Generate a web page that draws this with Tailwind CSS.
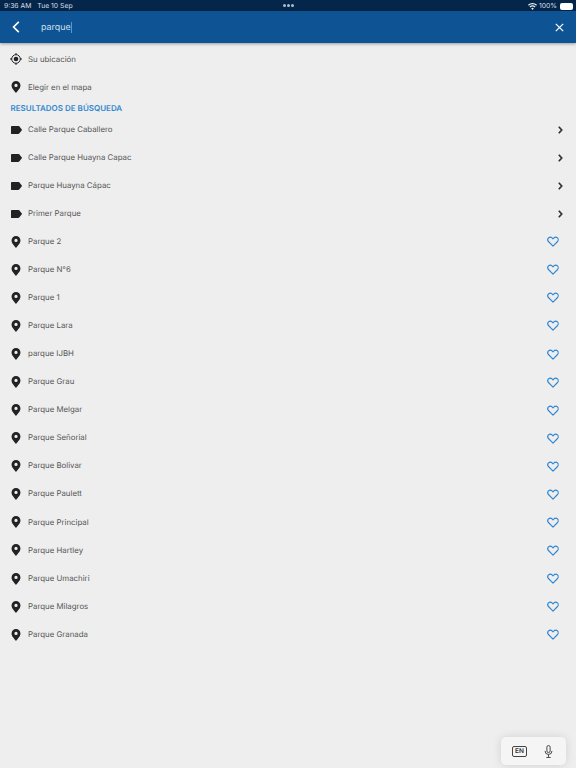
<!DOCTYPE html>
<html lang="es">
<head>
  <meta charset="utf-8" />
  <title>Buscar</title>
  <script src="https://cdn.jsdelivr.net/npm/@tailwindcss/browser@4"></script>
</head>
<body class="relative h-[768px] w-[576px] overflow-hidden bg-[#eeeeee] font-['Inter',sans-serif] [text-rendering:geometricPrecision]">
  <svg class="hidden">
    <symbol id="pin" viewBox="0 0 12 14"><path fill="#222" fill-rule="evenodd" d="M6 0a5.200 5.200 0 0 0-5.200 5.200c0 3.400 3.600 6.500 5.200 8.800 1.600-2.300 5.200-5.400 5.200-8.800A5.200 5.200 0 0 0 6 0Zm0 3.300a1.900 1.900 0 1 1 0 3.800 1.900 1.900 0 0 1 0-3.800Z"/></symbol>
    <symbol id="tag" viewBox="-1 -0.500 13 11"><path fill="#222" d="M1.200.6h6.800c.4 0 .7.100 1 .4l2.800 3.500a.6.6 0 0 1 0 .9L9 8.900c-.3.300-.6.500-1 .5H1.200C.6 9.400.1 9 .1 8.400V1.600C.1 1 .6.600 1.200.6Z"/></symbol>
    <symbol id="chev" viewBox="0 0 8 10"><path fill="none" stroke="#333" stroke-width="1.700" d="M2.800 1.800 5.700 5 2.800 8.200"/></symbol>
    <symbol id="heart" viewBox="0 0 14 13"><path fill="none" stroke="#2e86cf" stroke-width="1.300" stroke-linejoin="round" d="M7 11.900 1.900 6.800C.5 5.400.5 3.400 1.700 2.200c1.200-1.100 3-1.100 4.200.1L7 3.400l1.100-1.100c1.200-1.200 3-1.200 4.200-.1 1.200 1.200 1.200 3.200-.2 4.600L7 11.900Z"/></symbol>
  </svg>

  <div class="flex h-[11px] items-center justify-between bg-[#04264a] pl-1 pr-[3px] pt-px text-[6.800px] leading-none text-[#d5dde6]">
    <div class="flex gap-[6px]"><span>9:36 AM</span><span>Tue 10 Sep</span></div>
    <div class="flex items-center gap-[2px]">
      <svg class="h-[7px] w-[9px]" viewBox="0 0 18 14"><path fill="#e8edf2" d="M9 14 6.400 10.800a4 4 0 0 1 5.200 0Zm-4.400-5L3 7a9 9 0 0 1 12 0l-1.600 2a6.500 6.500 0 0 0-8.800 0ZM1.600 5.400 0 3.500a13.500 13.500 0 0 1 18 0l-1.600 1.900a11 11 0 0 0-14.800 0Z"/></svg>
      <span>100%</span>
      <span class="ml-[1px] flex h-[7px] w-[13px] rounded-[2px] border border-white/60 bg-white"></span>
    </div>
  </div>
  <div class="absolute left-[283px] top-[4px] flex gap-[1.500px]">
    <span class="size-[2.500px] rounded-full bg-[#aebccb]"></span><span class="size-[2.500px] rounded-full bg-[#aebccb]"></span><span class="size-[2.500px] rounded-full bg-[#aebccb]"></span>
  </div>

  <header class="flex h-[32px] items-center bg-[#0e5394] shadow-[0_1px_3px_rgba(0,0,0,0.35)]">
    <svg class="ml-[12px] h-[12px] w-[8px]" viewBox="0 0 8 12"><path fill="none" stroke="#fff" stroke-width="1.700" d="M6.800.8 1.600 6l5.200 5.200"/></svg>
    <span class="ml-[21px] pt-[2px] text-[8.900px] text-[#d3e0ee]">parque</span>
    <span class="mt-[1px] h-[11px] w-px bg-[#4a9bdc]"></span>
    <svg class="ml-auto mr-[12px] h-[9px] w-[9px]" viewBox="0 0 9 9"><path fill="none" stroke="#fff" stroke-width="1.200" d="m.8.800 7.400 7.400m0-7.400L.8 8.200"/></svg>
  </header>

  <main class="pt-[2px]">
    <div class="flex h-[28px] items-center pl-[10px] text-[7.850px] text-[#555]">
      <svg class="mr-[6px] size-[12px]" viewBox="0 0 12 12"><circle cx="6" cy="6" r="4.300" fill="none" stroke="#222" stroke-width="1"/><circle cx="6" cy="6" r="2.300" fill="#222"/><path stroke="#222" d="M6 0v2M6 10v2M0 6h2M10 6h2"/></svg>
      <span class="pt-px">Su ubicación</span>
    </div>
    <div class="flex h-[28px] items-center pl-[10px] text-[7.850px] text-[#555]">
      <svg class="mr-[6px] h-[12px] w-[12px]"><use href="#pin"/></svg>
      <span class="pt-px">Elegir en el mapa</span>
    </div>
    <h2 class="flex h-[14px] items-center pl-[10.500px] text-[8px] font-semibold text-[#2e86cf]">RESULTADOS DE BÚSQUEDA</h2>
    <ul id="results" class="pt-[0.500px] text-[7.850px] text-[#555]">
      <li class="flex h-[28.070px] items-center pl-[10px] pr-[12px]"><svg class="mr-[6px] size-[12px]"><use href="#tag"/></svg><span>Calle Parque Caballero</span><svg class="ml-auto h-[10px] w-[8px]"><use href="#chev"/></svg></li>
      <li class="flex h-[28.070px] items-center pl-[10px] pr-[12px]"><svg class="mr-[6px] size-[12px]"><use href="#tag"/></svg><span>Calle Parque Huayna Capac</span><svg class="ml-auto h-[10px] w-[8px]"><use href="#chev"/></svg></li>
      <li class="flex h-[28.070px] items-center pl-[10px] pr-[12px]"><svg class="mr-[6px] size-[12px]"><use href="#tag"/></svg><span>Parque Huayna Cápac</span><svg class="ml-auto h-[10px] w-[8px]"><use href="#chev"/></svg></li>
      <li class="flex h-[28.070px] items-center pl-[10px] pr-[12px]"><svg class="mr-[6px] size-[12px]"><use href="#tag"/></svg><span>Primer Parque</span><svg class="ml-auto h-[10px] w-[8px]"><use href="#chev"/></svg></li>
      <li class="flex h-[28.070px] items-center pl-[10px] pr-[17px]"><svg class="mr-[6px] size-[12px]"><use href="#pin"/></svg><span>Parque 2</span><svg class="ml-auto h-[11px] w-[12px]"><use href="#heart"/></svg></li>
      <li class="flex h-[28.070px] items-center pl-[10px] pr-[17px]"><svg class="mr-[6px] size-[12px]"><use href="#pin"/></svg><span>Parque N°6</span><svg class="ml-auto h-[11px] w-[12px]"><use href="#heart"/></svg></li>
      <li class="flex h-[28.070px] items-center pl-[10px] pr-[17px]"><svg class="mr-[6px] size-[12px]"><use href="#pin"/></svg><span>Parque 1</span><svg class="ml-auto h-[11px] w-[12px]"><use href="#heart"/></svg></li>
      <li class="flex h-[28.070px] items-center pl-[10px] pr-[17px]"><svg class="mr-[6px] size-[12px]"><use href="#pin"/></svg><span>Parque Lara</span><svg class="ml-auto h-[11px] w-[12px]"><use href="#heart"/></svg></li>
      <li class="flex h-[28.070px] items-center pl-[10px] pr-[17px]"><svg class="mr-[6px] size-[12px]"><use href="#pin"/></svg><span>parque IJBH</span><svg class="ml-auto h-[11px] w-[12px]"><use href="#heart"/></svg></li>
      <li class="flex h-[28.070px] items-center pl-[10px] pr-[17px]"><svg class="mr-[6px] size-[12px]"><use href="#pin"/></svg><span>Parque Grau</span><svg class="ml-auto h-[11px] w-[12px]"><use href="#heart"/></svg></li>
      <li class="flex h-[28.070px] items-center pl-[10px] pr-[17px]"><svg class="mr-[6px] size-[12px]"><use href="#pin"/></svg><span>Parque Melgar</span><svg class="ml-auto h-[11px] w-[12px]"><use href="#heart"/></svg></li>
      <li class="flex h-[28.070px] items-center pl-[10px] pr-[17px]"><svg class="mr-[6px] size-[12px]"><use href="#pin"/></svg><span>Parque Señorial</span><svg class="ml-auto h-[11px] w-[12px]"><use href="#heart"/></svg></li>
      <li class="flex h-[28.070px] items-center pl-[10px] pr-[17px]"><svg class="mr-[6px] size-[12px]"><use href="#pin"/></svg><span>Parque Bolivar</span><svg class="ml-auto h-[11px] w-[12px]"><use href="#heart"/></svg></li>
      <li class="flex h-[28.070px] items-center pl-[10px] pr-[17px]"><svg class="mr-[6px] size-[12px]"><use href="#pin"/></svg><span>Parque Paulett</span><svg class="ml-auto h-[11px] w-[12px]"><use href="#heart"/></svg></li>
      <li class="flex h-[28.070px] items-center pl-[10px] pr-[17px]"><svg class="mr-[6px] size-[12px]"><use href="#pin"/></svg><span>Parque Principal</span><svg class="ml-auto h-[11px] w-[12px]"><use href="#heart"/></svg></li>
      <li class="flex h-[28.070px] items-center pl-[10px] pr-[17px]"><svg class="mr-[6px] size-[12px]"><use href="#pin"/></svg><span>Parque Hartley</span><svg class="ml-auto h-[11px] w-[12px]"><use href="#heart"/></svg></li>
      <li class="flex h-[28.070px] items-center pl-[10px] pr-[17px]"><svg class="mr-[6px] size-[12px]"><use href="#pin"/></svg><span>Parque Umachiri</span><svg class="ml-auto h-[11px] w-[12px]"><use href="#heart"/></svg></li>
      <li class="flex h-[28.070px] items-center pl-[10px] pr-[17px]"><svg class="mr-[6px] size-[12px]"><use href="#pin"/></svg><span>Parque Milagros</span><svg class="ml-auto h-[11px] w-[12px]"><use href="#heart"/></svg></li>
      <li class="flex h-[28.070px] items-center pl-[10px] pr-[17px]"><svg class="mr-[6px] size-[12px]"><use href="#pin"/></svg><span>Parque Granada</span><svg class="ml-auto h-[11px] w-[12px]"><use href="#heart"/></svg></li>
    </ul>
  </main>

  <!-- teclado flotante -->
  <div class="absolute left-[501px] top-[737px] flex h-[28px] w-[65px] items-center rounded-[5px] bg-[#f5f5f5] pl-[11px] shadow-[0_0_10px_rgba(0,0,0,0.12)]">
    <span class="flex h-[11px] w-[15px] items-center justify-center rounded-[2px] border border-[#444] text-[6.500px] font-semibold leading-none text-[#333]">EN</span>
    <svg class="ml-[17px] h-[13px] w-[9px]" viewBox="0 0 8 12"><rect x="2.500" y=".5" width="3" height="6.500" rx="1.500" fill="none" stroke="#444" stroke-width=".9"/><path fill="none" stroke="#444" stroke-width=".9" d="M.8 5.500a3.200 3.200 0 0 0 6.400 0M4 8.700v2.300M2 11.500h4"/></svg>
  </div>
</body>
</html>
